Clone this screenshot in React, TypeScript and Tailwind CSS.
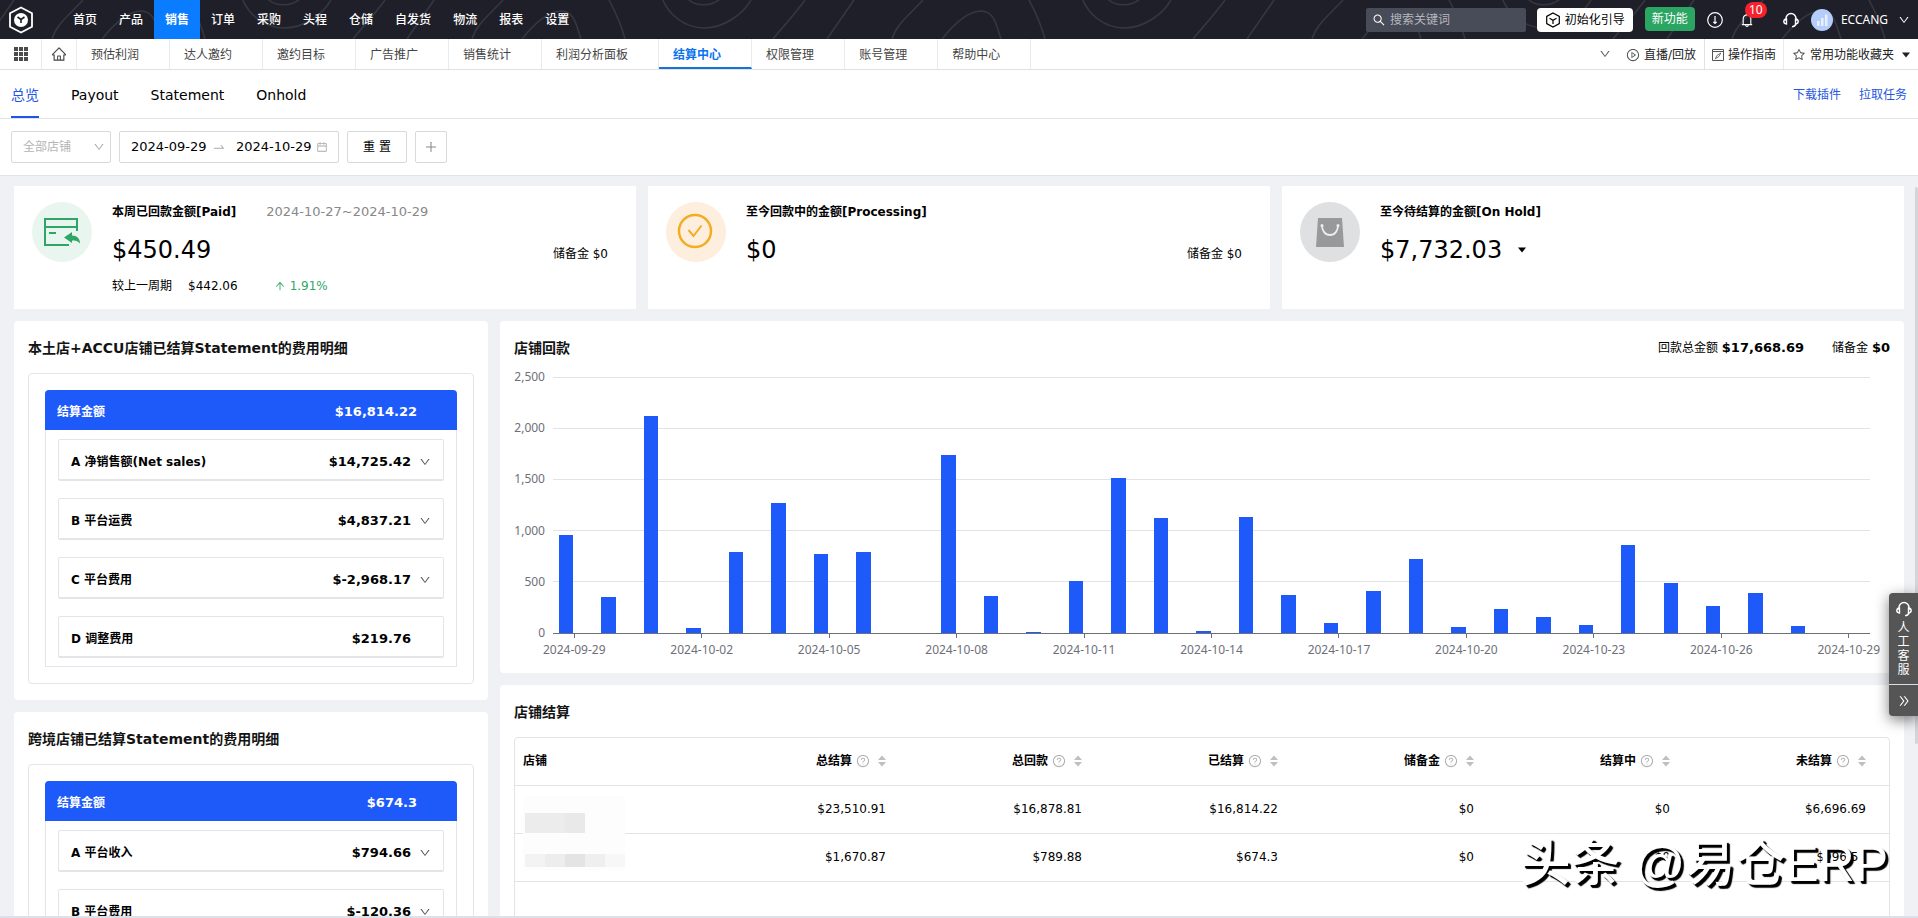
import type { ReactNode } from "react";
import {
  AiOutlineArrowUp,
  AiOutlineBell,
  AiOutlineCalendar,
  AiOutlineDoubleRight,
  AiOutlineDown,
  AiOutlineHome,
  AiOutlinePlayCircle,
  AiOutlinePlus,
  AiOutlineQuestionCircle,
  AiOutlineSearch,
  AiOutlineStar,
  AiOutlineSwapRight,
} from "react-icons/ai";

const navItems = ["首页", "产品", "销售", "订单", "采购", "头程", "仓储", "自发货", "物流", "报表", "设置"];

const pageTabs = [
  "预估利润",
  "达人邀约",
  "邀约目标",
  "广告推广",
  "销售统计",
  "利润分析面板",
  "结算中心",
  "权限管理",
  "账号管理",
  "帮助中心",
];

const subTabs = ["总览", "Payout", "Statement", "Onhold"];

type FeeItem = { label: string; value: string; expandable: boolean };

const localFees: FeeItem[] = [
  { label: "A 净销售额(Net sales)", value: "$14,725.42", expandable: true },
  { label: "B 平台运费", value: "$4,837.21", expandable: true },
  { label: "C 平台费用", value: "$-2,968.17", expandable: true },
  { label: "D 调整费用", value: "$219.76", expandable: false },
];

const crossBorderFees: FeeItem[] = [
  { label: "A 平台收入", value: "$794.66", expandable: true },
  { label: "B 平台费用", value: "$-120.36", expandable: true },
];

// one value per day, 2024-09-29 to 2024-10-29
const payouts = [
  957, 347, 2120, 53, 788, 1265, 767, 790, 0, 1735, 360, 14, 508, 1515, 1122, 20, 1128, 371, 95, 410, 725, 62, 234,
  155, 76, 862, 491, 262, 390, 66, 0,
];

const dayLabels = [
  "2024-09-29",
  "2024-10-02",
  "2024-10-05",
  "2024-10-08",
  "2024-10-11",
  "2024-10-14",
  "2024-10-17",
  "2024-10-20",
  "2024-10-23",
  "2024-10-26",
  "2024-10-29",
];

const columns = ["总结算", "总回款", "已结算", "储备金", "结算中", "未结算"];

const rows = [
  ["$23,510.91", "$16,878.81", "$16,814.22", "$0", "$0", "$6,696.69"],
  ["$1,670.87", "$789.88", "$674.3", "$0", "$0", "$996.57"],
];

// ---------------------------------------------------------------------------
// Icons
// ---------------------------------------------------------------------------

function LogoIcon() {
  return (
    <svg viewBox="0 0 26 28" className="h-7 w-[26px]" aria-hidden="true">
      <path d="M13 1.5 24 7.2v13.6L13 26.500 2 20.800V7.200Z" fill="none" stroke="#fff" strokeWidth="1.800" />
      <circle cx="13" cy="14" r="7" fill="#fff" />
      <path d="M9.500 11 13 13.500l3.500-2.500M13 13.500V17" fill="none" stroke="#1f1f29" strokeWidth="1.600" />
    </svg>
  );
}

function Contours() {
  return (
    <svg className="absolute inset-0 h-full w-full" aria-hidden="true">
      <defs>
        <pattern id="contours" x="220" y="0" width="420" height="39" patternUnits="userSpaceOnUse">
          <g fill="none" stroke="#363640" strokeWidth="1.500">
            <path d="M22-2C28 14 44 28 64 28S104 14 112-2" />
            <path d="M47-2C54 7 72 7 81-2" />
            <path d="M165 0C154 15 143 27 133 39" />
            <path d="M214 0 187 39" />
            <path d="M283 0C268 16 256 25 252 39" />
            <path d="M302 39C314 24 328 11 341 11S356 24 361 39" />
            <path d="M389 0C396 13 401 24 405 39" />
          </g>
        </pattern>
      </defs>
      <rect width="100%" height="100%" fill="url(#contours)" />
    </svg>
  );
}

function GridIcon() {
  return (
    <svg viewBox="0 0 14 14" className="size-3.5" fill="#4b4b4b" aria-hidden="true">
      {[0, 5, 10].map((y) => [0, 5, 10].map((x) => <rect key={`${x}-${y}`} x={x} y={y} width="4" height="4" />))}
    </svg>
  );
}

function CubeIcon() {
  return (
    <svg viewBox="0 0 16 16" className="size-4" fill="none" stroke="currentColor" strokeWidth="1.200" aria-hidden="true">
      <path d="M8 .9 14.300 4.400v7.200L8 15.100 1.700 11.600V4.400Z" />
      <path d="M4.500 6.200 8 8.200l3.500-2M8 8.200v3.800" />
    </svg>
  );
}

function DownloadIcon() {
  return (
    <svg viewBox="0 0 16 16" className="size-4" fill="none" stroke="currentColor" strokeWidth="1.200" aria-hidden="true">
      <circle cx="8" cy="8" r="7.300" />
      <path d="M8 4v7.500M6.300 9.800 8 11.500l1.700-1.700" />
    </svg>
  );
}

function HeadsetIcon({ className }: { className: string }) {
  return (
    <svg viewBox="0 0 16 16" className={className} fill="none" stroke="currentColor" strokeWidth="1.400" aria-hidden="true">
      <path d="M3 9V6.500a5 5 0 0 1 10 0V9" />
      <path d="M3.500 7C1.500 7.200.8 8.300.8 9.500S1.500 11.800 3.500 12V7ZM12.500 7c2 .2 2.700 1.300 2.700 2.500s-.7 2.300-2.700 2.500V7Z" />
      <path d="M13 12c-.5 1.800-1.800 2.600-4 2.600" />
    </svg>
  );
}

function GuideIcon() {
  return (
    <svg viewBox="0 0 12 12" className="size-3" fill="none" stroke="#555" aria-hidden="true">
      <path d="M.5.5h11v11H.5ZM.5 2.500h11" />
      <path d="M8.800 4 6.900 7.500 3.300 9.800l1.800-3.500Z" strokeWidth=".8" />
    </svg>
  );
}

function CaretIcon({ className }: { className: string }) {
  return (
    <svg viewBox="0 0 8 6" className={className} fill="currentColor" aria-hidden="true">
      <path d="M0 .5h8L4 5.500Z" />
    </svg>
  );
}

function PaidIcon() {
  return (
    <svg viewBox="0 0 60 60" className="size-[60px] shrink-0" aria-hidden="true">
      <circle cx="30" cy="30" r="30" fill="#e9f6ef" />
      <path d="M45 29V17H13v26h24M13 25h32M17 31h7" fill="none" stroke="#2fa567" strokeWidth="2" />
      <path d="m32 35.500 8-5.500v3.500c5 0 8 3 8 8-2-2.500-4.500-3-8-3V41Z" fill="#2fa567" />
    </svg>
  );
}

function ProcessingIcon() {
  return (
    <svg viewBox="0 0 60 60" className="size-[60px] shrink-0" aria-hidden="true">
      <circle cx="30" cy="30" r="30" fill="#fdeede" />
      <circle cx="29" cy="29" r="16" fill="none" stroke="#f3ad24" strokeWidth="2.500" />
      <path d="m22.500 28 5 6 8-10.500" fill="none" stroke="#f3ad24" strokeWidth="2" />
    </svg>
  );
}

function OnHoldIcon() {
  return (
    <svg viewBox="0 0 60 60" className="size-[60px] shrink-0" aria-hidden="true">
      <circle cx="30" cy="30" r="30" fill="#dfe0e1" />
      <path d="M18 16h24l2 29H16Z" fill="#98999b" />
      <path d="M22 23.500c0 5 3 9.500 8 9.500s8-4.500 8-9.500" fill="none" stroke="#eee" strokeWidth="1.800" />
      <circle cx="22" cy="23.500" r="1.500" fill="#eee" />
      <circle cx="38" cy="23.500" r="1.500" fill="#eee" />
    </svg>
  );
}

function SortIcon() {
  return (
    <svg viewBox="0 0 8 12" className="h-3 w-2" fill="#bfbfbf" aria-hidden="true">
      <path d="M4 .5 8 5H0ZM4 11.500 0 7h8Z" />
    </svg>
  );
}

// ---------------------------------------------------------------------------
// Header bars
// ---------------------------------------------------------------------------

function TopBar() {
  return (
    <header className="relative flex h-[39px] shrink-0 items-center bg-[#1f1f29] text-white">
      <Contours />
      <a href="#home" aria-label="ECCANG" className="relative ml-2 w-[54px]">
        <LogoIcon />
      </a>
      <nav className="relative flex h-full">
        {navItems.map((item) => (
          <a
            key={item}
            href={`#${item}`}
            className={
              item === "销售"
                ? "flex items-center bg-[#0a7cff] px-[11px] font-bold"
                : "flex items-center px-[11px] font-medium"
            }
          >
            {item}
          </a>
        ))}
      </nav>

      <div className="relative ml-auto flex items-center pr-2">
        <label className="flex h-6 w-40 items-center gap-1 rounded-xs bg-[#484c58] pl-1.5">
          <AiOutlineSearch className="size-3.5 shrink-0" />
          <input
            type="text"
            aria-label="搜索"
            placeholder="搜索关键词"
            className="w-full min-w-0 bg-transparent outline-none placeholder:text-[#b5b7bd]"
          />
        </label>
        <button type="button" className="ml-[11px] flex h-6 w-24 items-center justify-center gap-1 rounded-sm bg-white text-black">
          <CubeIcon />
          初始化引导
        </button>
        <button type="button" className="ml-3 mb-0.5 h-6 w-[50px] rounded-sm bg-[#2ba562]">
          新功能
        </button>
        <button type="button" aria-label="下载" className="ml-3">
          <DownloadIcon />
        </button>
        <button type="button" aria-label="通知" className="relative ml-4">
          <AiOutlineBell className="size-4" />
          <span className="absolute -top-2.5 left-1.5 h-4 w-[22px] rounded-full bg-[#f5222d] text-center font-[Noto_Sans] leading-4">
            10
          </span>
        </button>
        <button type="button" aria-label="客服" className="ml-7">
          <HeadsetIcon className="size-4" />
        </button>
        <button type="button" className="ml-3 flex items-center font-[Noto_Sans]">
          <svg viewBox="0 0 22 22" className="size-[22px]" aria-hidden="true">
            <circle cx="11" cy="11" r="11" fill="#b4cdfb" />
            <path d="M6 12h2.500v5H6ZM10 9h2.500v8H10ZM14 5.500h2.500V17H14Z" fill="#e8f0ff" />
          </svg>
          <span className="ml-2">ECCANG</span>
          <AiOutlineDown className="ml-2.5 size-3" />
        </button>
      </div>
    </header>
  );
}

function TabBar() {
  return (
    <div className="flex h-[31px] shrink-0 items-stretch border-b border-[#dfe1e4] text-[#444]">
      <button type="button" aria-label="菜单" className="flex w-[42px] items-center justify-center border-r border-[#e8ebee]">
        <GridIcon />
      </button>
      <a href="#home" aria-label="首页" className="flex w-[35px] items-center justify-center border-r border-[#e8ebee]">
        <AiOutlineHome className="size-4" />
      </a>
      <nav className="flex">
        {pageTabs.map((tab) => (
          <a
            key={tab}
            href={`#${tab}`}
            className={
              tab === "结算中心"
                ? "flex items-center border-r border-r-[#e8ebee] border-b-2 border-b-[#1873d8] pt-1 pr-[30px] pl-3.5 font-bold text-[#0a74f0]"
                : "flex items-center border-r border-[#e8ebee] pt-0.5 pr-[30px] pl-3.5"
            }
          >
            {tab}
          </a>
        ))}
      </nav>

      <div className="ml-auto flex items-stretch text-[#222]">
        <button type="button" aria-label="更多标签" className="flex items-center pr-[15px]">
          <AiOutlineDown className="size-3 text-[#555]" />
        </button>
        <a href="#live" className="flex items-center gap-1 border-r border-[#dfe1e4] pt-0.5 pr-2">
          <AiOutlinePlayCircle className="size-3.5 text-[#555]" />
          直播/回放
        </a>
        <a href="#guide" className="flex items-center gap-1 border-r border-[#e8ebee] px-[7px] pt-0.5">
          <GuideIcon />
          操作指南
        </a>
        <button type="button" className="flex items-center gap-1 px-2 pt-0.5">
          <AiOutlineStar className="size-3.5 text-[#555]" />
          常用功能收藏夹
          <CaretIcon className="ml-1 h-1.5 w-2" />
        </button>
      </div>
    </div>
  );
}

function SubTabs() {
  return (
    <div className="flex h-[49px] shrink-0 items-stretch justify-between border-b border-[#e2e3e5] px-[11px]">
      <nav className="flex gap-8 text-sm">
        {subTabs.map((tab) => (
          <a
            key={tab}
            href={`#${tab}`}
            className={
              tab === "总览"
                ? "flex items-center border-b-2 border-[#1d55e5] pt-1 text-[#1d55e5]"
                : "flex items-center pt-0.5"
            }
          >
            {tab}
          </a>
        ))}
      </nav>
      <div className="flex items-center gap-[18px] pt-0.5 text-[#2456e0]">
        <a href="#plugin">下载插件</a>
        <a href="#tasks">拉取任务</a>
      </div>
    </div>
  );
}

function Filters() {
  return (
    <form className="flex shrink-0 gap-2 border-b border-[#e2e3e5] px-[11px] py-3">
      <div className="relative">
        <select
          aria-label="店铺"
          className="h-8 w-[100px] appearance-none rounded-xs border border-[#d9d9d9] bg-white pl-[11px] text-[#b5b5b5]"
        >
          <option>全部店铺</option>
        </select>
        <AiOutlineDown className="pointer-events-none absolute top-2.5 right-1.5 size-3 text-[#aaa]" />
      </div>
      <div className="flex h-8 w-[220px] items-center rounded-xs border border-[#d9d9d9] pl-[11px] text-[13px]">
        <input type="text" aria-label="开始日期" defaultValue="2024-09-29" className="w-[81px] outline-none" />
        <AiOutlineSwapRight className="size-3.5 text-[#aaa]" />
        <input type="text" aria-label="结束日期" defaultValue="2024-10-29" className="ml-2.5 w-20 outline-none" />
        <AiOutlineCalendar className="size-3 text-[#aaa]" />
      </div>
      <button type="reset" className="h-8 w-[60px] rounded-xs border border-[#d9d9d9]">
        重 置
      </button>
      <button type="button" aria-label="添加" className="flex size-8 items-center justify-center rounded-xs border border-[#d9d9d9]">
        <AiOutlinePlus className="size-3.5 text-[#888]" />
      </button>
    </form>
  );
}

// ---------------------------------------------------------------------------
// Summary cards
// ---------------------------------------------------------------------------

function StatCard({
  icon,
  title,
  range,
  amount,
  reserve,
  caret,
  children,
}: {
  icon: ReactNode;
  title: string;
  range?: string;
  amount: string;
  reserve?: string;
  caret?: boolean;
  children?: ReactNode;
}) {
  return (
    <section className="flex h-[123px] gap-5 bg-white pt-4 pr-7 pl-[18px]">
      {icon}
      <div className="min-w-0 flex-1">
        <div className="flex h-5 items-center gap-[30px]">
          <h2 className="font-bold">{title}</h2>
          {range ? <span className="text-[13px] text-[#888]">{range}</span> : null}
        </div>
        <div className="mt-2 flex h-10 items-center">
          <span className="text-2xl">{amount}</span>
          {caret ? <CaretIcon className="ml-4 h-1.5 w-2" /> : null}
          {reserve ? <span className="ml-auto pt-2">储备金 {reserve}</span> : null}
        </div>
        {children}
      </div>
    </section>
  );
}

// ---------------------------------------------------------------------------
// Fee breakdown
// ---------------------------------------------------------------------------

function FeeCard({ title, total, items }: { title: string; total: string; items: FeeItem[] }) {
  return (
    <section className="shrink-0 rounded-sm bg-white px-3.5 py-4">
      <h2 className="text-sm leading-[22px] font-bold text-[#141414]">{title}</h2>
      <div className="mt-3.5 rounded-sm border border-[#e4e5e8] p-4">
        <div className="flex h-10 items-center justify-between rounded-t-sm bg-[#1e5afa] pt-1 pr-10 pl-3 font-bold text-white">
          <span>结算金额</span>
          <span className="text-[13px]">{total}</span>
        </div>
        <ul className="space-y-[17px] border border-t-0 border-[#e4e5e8] px-3 pt-[9px] pb-2">
          {items.map((item) => (
            <li key={item.label}>
              <button
                type="button"
                className="flex h-[42px] w-full items-center rounded-xs border border-b-2 border-[#e4e5e8] pt-1 pr-3 pl-3 font-bold text-black"
              >
                <span>{item.label}</span>
                <span className="ml-auto text-[13px]">{item.value}</span>
                <span className="ml-2 w-3">
                  {item.expandable ? <AiOutlineDown className="size-3 text-[#555]" /> : null}
                </span>
              </button>
            </li>
          ))}
        </ul>
      </div>
    </section>
  );
}

// ---------------------------------------------------------------------------
// Payout chart
// ---------------------------------------------------------------------------

const plotHeight = 256;
const maxValue = 2500;

function toY(value: number) {
  return plotHeight - (value / maxValue) * plotHeight;
}

function toX(slot: number) {
  return `${(slot / payouts.length) * 100}%`;
}

function PayoutChart() {
  return (
    <svg
      className="h-64 w-full overflow-visible font-[Noto_Sans] text-xs"
      role="img"
      aria-label="店铺回款"
      shapeRendering="crispEdges"
    >
      {[0, 500, 1000, 1500, 2000, 2500].map((tick) => (
        <g key={tick}>
          {tick > 0 ? <line x1="0" x2="100%" y1={toY(tick)} y2={toY(tick)} stroke="#e0e3e8" /> : null}
          <text x="-8" y={toY(tick) + 4} textAnchor="end" fill="#6e7079">
            {tick.toLocaleString("en-US")}
          </text>
        </g>
      ))}
      {payouts.map((value, i) => (
        <rect
          key={i}
          x={toX(i + 0.14)}
          y={toY(value)}
          width={toX(0.34)}
          height={plotHeight - toY(value)}
          fill="#1e5afa"
        />
      ))}
      <line x1="0" x2="100%" y1={plotHeight} y2={plotHeight} stroke="#6e7079" />
      {dayLabels.map((label, i) => (
        <g key={label}>
          <line x1={toX(i * 3 + 0.5)} x2={toX(i * 3 + 0.5)} y1={plotHeight} y2={plotHeight + 5} stroke="#6e7079" />
          <text x={toX(i * 3 + 0.5)} y={plotHeight + 21} textAnchor="middle" fill="#6e7079">
            {label}
          </text>
        </g>
      ))}
    </svg>
  );
}

// ---------------------------------------------------------------------------
// Settlement table
// ---------------------------------------------------------------------------

function MaskedShops() {
  return (
    <div className="absolute top-2.5 left-2 flex h-[74px] w-[102px] flex-col bg-[#fdfdfd] pt-[17px] pl-0.5" aria-hidden="true">
      <div className="flex h-5">
        <span className="w-10 bg-[#ececec]" />
        <span className="w-5 bg-[#e9e9e9]" />
      </div>
      <div className="mt-[21px] flex h-[13px]">
        <span className="w-5 bg-[#f3f3f3]" />
        <span className="w-5 bg-[#ededed]" />
        <span className="w-5 bg-[#e4e4e4]" />
        <span className="w-5 bg-[#efefef]" />
        <span className="w-5 bg-[#f7f7f7]" />
      </div>
    </div>
  );
}

function SettlementTable() {
  return (
    <div className="mt-3.5 rounded-t-sm border border-[#e2e4e7] pb-12">
      <table className="w-full table-fixed border-collapse">
        <colgroup>
          <col />
          <col className="w-[196px]" />
          <col className="w-[196px]" />
          <col className="w-[196px]" />
          <col className="w-[196px]" />
          <col className="w-[196px]" />
          <col className="w-[211px]" />
        </colgroup>
        <thead>
          <tr className="h-[47px] border-b border-[#e2e4e7]">
            <th scope="col" className="px-2 text-left font-bold">
              店铺
            </th>
            {columns.map((column) => (
              <th key={column} scope="col" className="pr-2 font-bold last:pr-[23px]">
                <div className="flex items-center justify-end">
                  {column}
                  <AiOutlineQuestionCircle className="ml-1 size-3.5 text-[#b0b0b0]" />
                  <button type="button" aria-label={`${column}排序`} className="ml-2">
                    <SortIcon />
                  </button>
                </div>
              </th>
            ))}
          </tr>
        </thead>
        <tbody>
          {rows.map((row, i) => (
            <tr key={row[0]} className="h-12 border-b border-[#e2e4e7]">
              <td className="relative">{i === 0 ? <MaskedShops /> : null}</td>
              {row.map((cell, j) => (
                <td key={j} className="pr-2 text-right last:pr-[23px]">
                  {cell}
                </td>
              ))}
            </tr>
          ))}
        </tbody>
      </table>
    </div>
  );
}

// ---------------------------------------------------------------------------
// Page
// ---------------------------------------------------------------------------

function ServiceDock() {
  return (
    <aside className="absolute right-0 bottom-[200px] w-[29px] rounded-l-sm bg-[#555] text-white shadow-[0_4px_14px_rgba(0,0,0,0.5)]">
      <button type="button" className="flex h-[92px] w-full flex-col items-center border-b border-white/80 pt-2">
        <HeadsetIcon className="size-4" />
        <span className="mt-1 w-3 leading-[14px]">人工客服</span>
      </button>
      <button type="button" aria-label="收起" className="flex h-[31px] w-full items-center justify-center">
        <AiOutlineDoubleRight className="size-3.5" />
      </button>
    </aside>
  );
}

export default function App() {
  return (
    <div className="relative flex h-screen flex-col overflow-hidden border-b-2 border-[#dbe2ea] bg-white font-['DejaVu_Sans','Noto_Sans_CJK_SC',sans-serif] text-xs text-black">
      <TopBar />
      <TabBar />
      <SubTabs />
      <Filters />

      <main className="flex min-h-0 flex-1 flex-col gap-3 overflow-hidden bg-[#f0f1f5] px-3.5 pt-2.5">
        <div className="grid shrink-0 grid-cols-3 gap-3">
          <StatCard
            icon={<PaidIcon />}
            title="本周已回款金额[Paid]"
            range="2024-10-27~2024-10-29"
            amount="$450.49"
            reserve="$0"
          >
            <div className="mt-1.5 flex h-5 items-center">
              <span>较上一周期</span>
              <span className="ml-4">$442.06</span>
              <span className="ml-9 flex items-center gap-1 text-[#2fa567]">
                <AiOutlineArrowUp className="size-3" />
                1.91%
              </span>
            </div>
          </StatCard>
          <StatCard icon={<ProcessingIcon />} title="至今回款中的金额[Processing]" amount="$0" reserve="$0" />
          <StatCard icon={<OnHoldIcon />} title="至今待结算的金额[On Hold]" amount="$7,732.03" caret />
        </div>

        <div className="flex min-h-0 flex-1 gap-3">
          <div className="flex w-[474px] shrink-0 flex-col gap-3">
            <FeeCard title="本土店+ACCU店铺已结算Statement的费用明细" total="$16,814.22" items={localFees} />
            <FeeCard title="跨境店铺已结算Statement的费用明细" total="$674.3" items={crossBorderFees} />
          </div>

          <div className="flex min-w-0 flex-1 flex-col gap-3">
            <section className="shrink-0 rounded-sm bg-white px-3.5 pt-4 pb-10">
              <div className="flex h-[22px] items-center">
                <h2 className="text-sm font-bold text-[#141414]">店铺回款</h2>
                <p className="ml-auto">
                  回款总金额 <b className="text-[13px]">$17,668.69</b>
                </p>
                <p className="ml-7">
                  储备金 <b className="text-[13px]">$0</b>
                </p>
              </div>
              <div className="mt-[18px] pr-5 pl-[39px]">
                <PayoutChart />
              </div>
            </section>
            <section className="shrink-0 rounded-sm bg-white px-3.5 py-4">
              <h2 className="text-sm leading-[22px] font-bold text-[#141414]">店铺结算</h2>
              <SettlementTable />
            </section>
          </div>
        </div>
      </main>

      <div className="absolute top-[187px] right-0 bottom-[172px] w-[3px] rounded-full bg-[#d3d5d9]" />
      <ServiceDock />
      <p className="absolute right-[30px] bottom-[22px] font-['Liberation_Sans','Noto_Sans_CJK_SC',sans-serif] text-[50px] leading-[60px] font-medium text-white [text-shadow:2px_2px_1px_#000,3px_3px_1px_#000]">
        头条 @易仓ERP
      </p>
    </div>
  );
}
